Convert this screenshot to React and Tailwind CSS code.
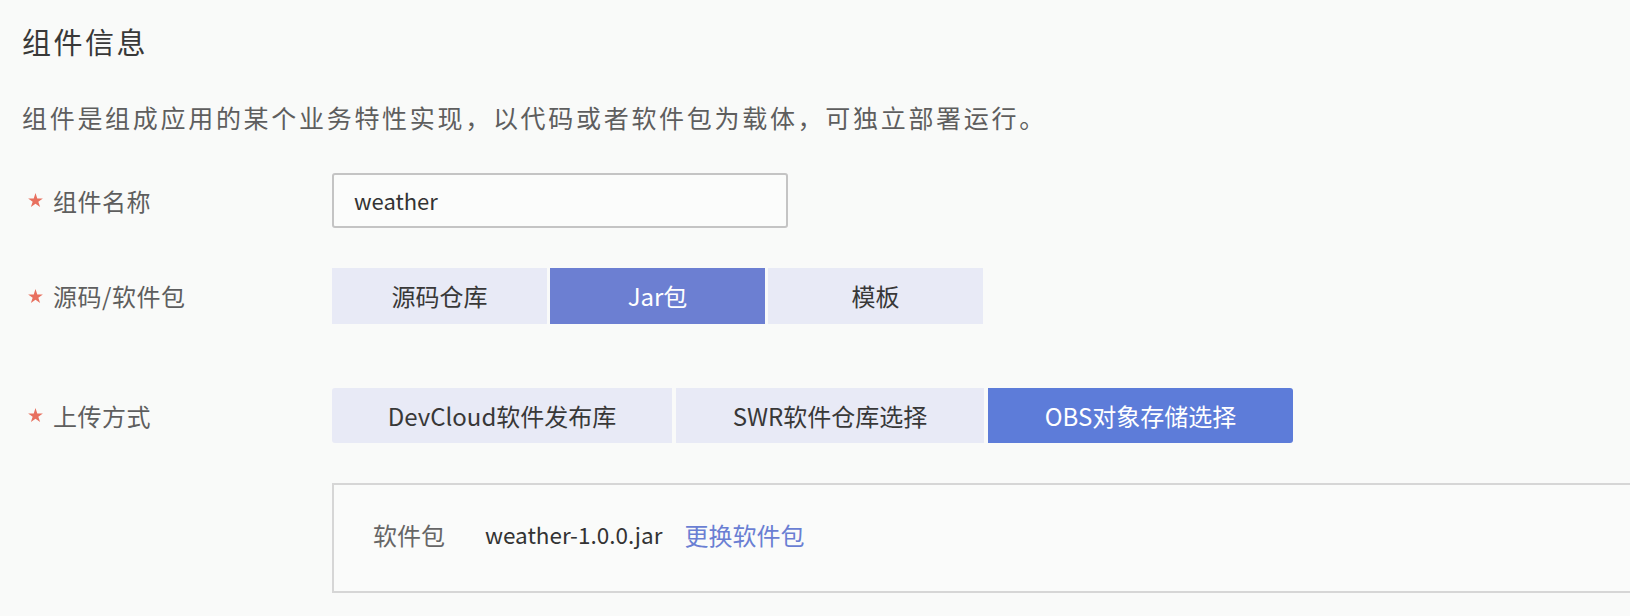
import React, { useState } from 'react';

const font = { fontFamily: '"Noto Sans CJK SC", "Noto Sans", sans-serif' };

function Star() {
  return (
    <svg width="17" height="17" viewBox="0 0 24 24" className="shrink-0">
      <path
        d="M12 1.5l2.5 7.5h7.9l-6.4 4.6 2.5 7.6L12 16.5l-6.5 4.7 2.5-7.6-6.4-4.6h7.9z"
        fill="#e8705f"
      />
    </svg>
  );
}

function Label({ children }) {
  return (
    <div className="w-[310px] shrink-0 flex items-center pl-[5px]">
      <Star />
      <span className="ml-[9px] text-[24px] text-[#5e5e5e] tracking-[0.5px]">{children}</span>
    </div>
  );
}

export default function App() {
  const [source, setSource] = useState('jar');
  const [upload, setUpload] = useState('obs');

  const sources = [
    { id: 'repo', name: '源码仓库' },
    { id: 'jar', name: 'Jar包' },
    { id: 'tpl', name: '模板' },
  ];
  const uploads = [
    { id: 'devcloud', name: 'DevCloud软件发布库', w: 'w-[340px]', round: 'rounded-l-[3px]' },
    { id: 'swr', name: 'SWR软件仓库选择', w: 'w-[308px]', round: '' },
    { id: 'obs', name: 'OBS对象存储选择', w: 'w-[305px]', round: 'rounded-r-[3px]' },
  ];

  return (
    <div className="min-h-screen w-full overflow-hidden bg-[#f9faf9] pl-[22px] pt-[21px]" style={font}>
      <h2 className="text-[29px] leading-[40px] text-[#383838] tracking-[2.5px]">组件信息</h2>
      <p className="mt-[38px] text-[25px] leading-[36px] text-[#5e5e5e] tracking-[2.7px]">
        组件是组成应用的某个业务特性实现，以代码或者软件包为载体，可独立部署运行。
      </p>

      <div className="mt-[38px] flex items-center">
        <Label>组件名称</Label>
        <div className="w-[456px] h-[55px] border-2 border-[#c4c4c4] rounded-[3px] bg-[#fbfcfb] flex items-center px-[20px]">
          <span className="text-[22px] text-[#333]">weather</span>
        </div>
      </div>

      <div className="mt-[40px] flex items-center">
        <Label>源码/软件包</Label>
        <div className="flex gap-[3px]">
          {sources.map((s) => (
            <button
              key={s.id}
              onClick={() => setSource(s.id)}
              className={`w-[215px] h-[56px] flex items-center justify-center text-[24px] ${
                source === s.id ? 'bg-[#6c7fd2] text-white' : 'bg-[#e8eaf6] text-[#383838]'
              }`}
            >
              {s.name}
            </button>
          ))}
        </div>
      </div>

      <div className="mt-[64px] flex items-center">
        <Label>上传方式</Label>
        <div className="flex gap-[4px]">
          {uploads.map((u) => (
            <button
              key={u.id}
              onClick={() => setUpload(u.id)}
              className={`${u.w} ${u.round} h-[55px] flex items-center justify-center text-[24px] ${
                upload === u.id ? 'bg-[#5d7cd9] text-white' : 'bg-[#e8eaf6] text-[#383838]'
              }`}
            >
              {u.name}
            </button>
          ))}
        </div>
      </div>

      <div className="mt-[40px] ml-[310px] w-[1360px] h-[110px] border-2 border-[#d6d6d6] bg-[#fafbfa] flex items-center pl-[39px] pb-[6px]">
        <span className="text-[24px] text-[#666]">软件包</span>
        <span className="ml-[40px] text-[22.5px] text-[#333]">weather-1.0.0.jar</span>
        <a className="ml-[22px] text-[24px] text-[#6a7fd3] cursor-pointer">更换软件包</a>
      </div>
    </div>
  );
}
